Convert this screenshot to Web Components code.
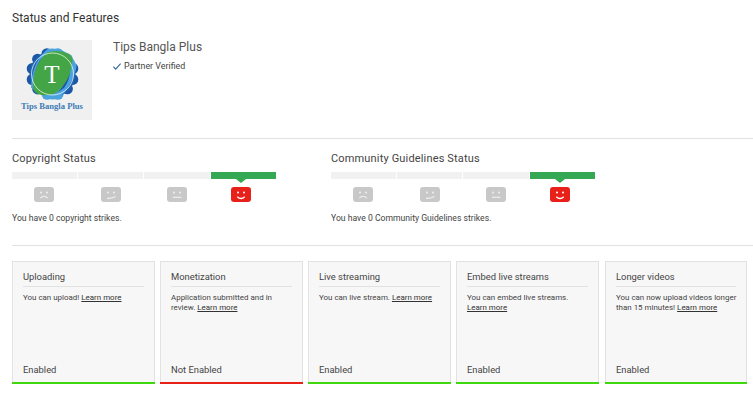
<!DOCTYPE html>
<html><head><meta charset="utf-8">
<style>
html,body{margin:0;padding:0;background:#fff}
body{width:753px;height:401px;overflow:hidden;font-family:Roboto,"Liberation Sans",sans-serif;color:#333}
</style></head><body>
<status-page></status-page>
<script>
const FACES={
 sad:'<path d="M6.3 11.2q3.7-3.8 7.4 0" fill="none" stroke="#f0f0f0" stroke-width="1.1"/>',
 meh:'<path d="M6 11.4q4.5.2 8.5-1.9" fill="none" stroke="#f0f0f0" stroke-width="1.1"/>',
 flat:'<path d="M6 10.3h8.6" fill="none" stroke="#f0f0f0" stroke-width="1.1"/>',
 happy:'<path d="M6.2 9.7q3.9 3.6 7.6 0" fill="none" stroke="#fff" stroke-width="1.2"/>'
};
class StrikeFace extends HTMLElement{
 connectedCallback(){
  const k=this.getAttribute('kind');const on=k==='happy';
  const bg=on?'#e8201a':'#c8c8c8',eye=on?'#fff':'#f0f0f0';
  this.attachShadow({mode:'open'}).innerHTML=`<style>:host{display:flex;justify-content:center}svg{display:block}</style>
  <svg width="20" height="15" viewBox="0 0 20 15"><rect width="20" height="15" rx="3" fill="${bg}"/>
  <circle cx="7" cy="5.6" r="1" fill="${eye}"/><circle cx="13" cy="5.6" r="1" fill="${eye}"/>${FACES[k]}</svg>`;
 }
}
customElements.define('strike-face',StrikeFace);
class StrikeStatus extends HTMLElement{
 connectedCallback(){
  const t=this.getAttribute('heading'),m=this.getAttribute('message');
  this.attachShadow({mode:'open'}).innerHTML=`<style>
  :host{display:block;width:264px}
  h3{margin:0;font:400 11px/14px Roboto,sans-serif;letter-spacing:.16px;color:#444}
  .bar{display:grid;grid-template-columns:66px 66px 67px 65px;margin-top:6px;height:7px}
  .bar i{display:block;background:#f1f1f1;border-right:1px solid #fff}
  .bar i:last-child{background:#34a853;border-right:0;position:relative}
  .bar i:last-child::after{content:"";position:absolute;left:25px;top:7px;border:5px solid transparent;border-top:4px solid #34a853;border-bottom:0}
  .faces{display:grid;grid-template-columns:64px 70px 62px 66px;margin-top:8px}
  p{margin:10px 0 0;font:400 8.65px/12px Roboto,sans-serif;color:#444}
  </style><h3>${t}</h3><div class="bar"><i></i><i></i><i></i><i></i></div>
  <div class="faces"><strike-face kind="sad"></strike-face><strike-face kind="meh"></strike-face><strike-face kind="flat"></strike-face><strike-face kind="happy"></strike-face></div>
  <p>${m}</p>`;
 }
}
customElements.define('strike-status',StrikeStatus);
class FeatureCard extends HTMLElement{
 connectedCallback(){
  const bad=this.hasAttribute('off');
  this.attachShadow({mode:'open'}).innerHTML=`<style>
  :host{display:flex;flex-direction:column;box-sizing:border-box;width:143px;height:123px;background:#f7f7f7;border:1px solid #e2e2e2;border-bottom:0;padding:0 10px;position:relative}
  h4{margin:0;padding:9px 0 3px;font:400 9.4px/12px Roboto,sans-serif;color:#444;border-bottom:1px solid #e2e2e2}
  .body{flex:1;margin:0 -2px 0 0;padding-top:6px;font:400 7.95px/10px Roboto,sans-serif;color:#444}
  ::slotted(a){display:inline-block;line-height:10px;color:#333;text-decoration:underline}
  .st{font:400 9.4px/12px Roboto,sans-serif;color:#444;padding-bottom:6px}
  .line{height:2px;background:${bad?'#e8201a':'#3fd80f'};margin:0 -11px}
  </style><h4>${this.getAttribute('heading')}</h4><div class="body"><slot></slot></div>
  <div class="st">${bad?'Not Enabled':'Enabled'}</div><div class="line"></div>`;
 }
}
customElements.define('feature-card',FeatureCard);
class ChannelHead extends HTMLElement{
 connectedCallback(){
  let lobes='';
  const cols=['#1b57a6','#1b57a6','#4ba3de','#4ba3de','#1b57a6','#1b57a6','#1b57a6','#1b57a6','#1b57a6','#4ba3de','#4ba3de','#1b57a6'];
  for(let i=0;i<12;i++){const a=i*Math.PI/6+.26,x=40.5+21*Math.cos(a),y=34+21*Math.sin(a);
   lobes+=`<circle cx="${x.toFixed(1)}" cy="${y.toFixed(1)}" r="5.5" fill="${cols[i]}"/>`;}
  this.attachShadow({mode:'open'}).innerHTML=`<style>
  :host{display:flex;gap:21px}
  .logo{width:80px;height:80px;background:#f0f0f0;display:block}
  .logo text{font-family:"Liberation Serif",serif}
  h2{margin:0;font:400 12px/14px Roboto,sans-serif;color:#555}
  .v{display:flex;align-items:center;gap:3px;margin-top:6px;font:400 8.9px/12px Roboto,sans-serif;color:#444}
  </style>
  <svg class="logo" viewBox="0 0 80 80">
   <defs><clipPath id="c"><circle cx="40.5" cy="34" r="25.5"/></clipPath></defs>
   ${lobes}<circle cx="40.5" cy="34" r="23" fill="#1f62b0"/>
   <path clip-path="url(#c)" d="M19 48Q20 18 40 6L66 16Q64 46 42 62Z" fill="#4ba3de"/>
   <path clip-path="url(#c)" d="M24 40Q26 24 34 16L28 20Q22 30 22 40ZM56 30Q54 44 46 52L52 48Q58 40 58 30Z" fill="#1b57a6"/>
   <path d="M21 46Q21 24 36 12Q48 9 57 14Q62 18 60 24Q58 42 44 53Q34 57 26 54Q21 52 21 46Z" fill="#43a546"/>
   <circle cx="40.5" cy="34" r="21" fill="none" stroke="#fff" stroke-width=".7"/>
   <text x="40" y="43" text-anchor="middle" font-size="25" fill="#fff">T</text>
   <text x="40" y="69" text-anchor="middle" font-size="8.6" font-weight="700" fill="#3f7cb5">Tips Bangla Plus</text>
  </svg>
  <div><h2>Tips Bangla Plus</h2>
  <div class="v"><svg width="8" height="7" viewBox="0 0 8 7"><path d="M.4 3.6l2.3 2.5L7.6.6" fill="none" stroke="#2f66a0" stroke-width="1.1"/></svg>Partner Verified</div></div>`;
 }
}
customElements.define('channel-head',ChannelHead);
class StatusPage extends HTMLElement{
 connectedCallback(){
  this.attachShadow({mode:'open'}).innerHTML=`<style>
  :host{display:block;padding:11px 0 0 12px}
  h1{margin:0 0 15px;font:400 12px/14px Roboto,sans-serif;letter-spacing:.03px;color:#333}
  hr{border:0;border-top:1px solid #e2e2e2;margin:0}
  .a{margin-top:18px}
  .row{display:flex;gap:55px;padding:13px 0 0}
  .b{margin-top:21px}
  .cards{display:flex;gap:5px;margin-top:15px}
  .cards feature-card:last-child{margin-left:1px;width:142px}
  a{color:#333}
  </style>
  <h1>Status and Features</h1>
  <channel-head></channel-head>
  <hr class="a">
  <div class="row">
   <strike-status heading="Copyright Status" message="You have 0 copyright strikes."></strike-status>
   <strike-status heading="Community Guidelines Status" message="You have 0 Community Guidelines strikes."></strike-status>
  </div>
  <hr class="b">
  <div class="cards">
   <feature-card heading="Uploading">You can upload! <a href="#">Learn more</a></feature-card>
   <feature-card heading="Monetization" off>Application submitted and in<br>review. <a href="#">Learn more</a></feature-card>
   <feature-card heading="Live streaming">You can live stream. <a href="#">Learn more</a></feature-card>
   <feature-card heading="Embed live streams">You can embed live streams. <a href="#">Learn more</a></feature-card>
   <feature-card heading="Longer videos">You can now upload videos longer<br>than 15 minutes! <a href="#">Learn more</a></feature-card>
  </div>`;
 }
}
customElements.define('status-page',StatusPage);
</script>
</body></html>
